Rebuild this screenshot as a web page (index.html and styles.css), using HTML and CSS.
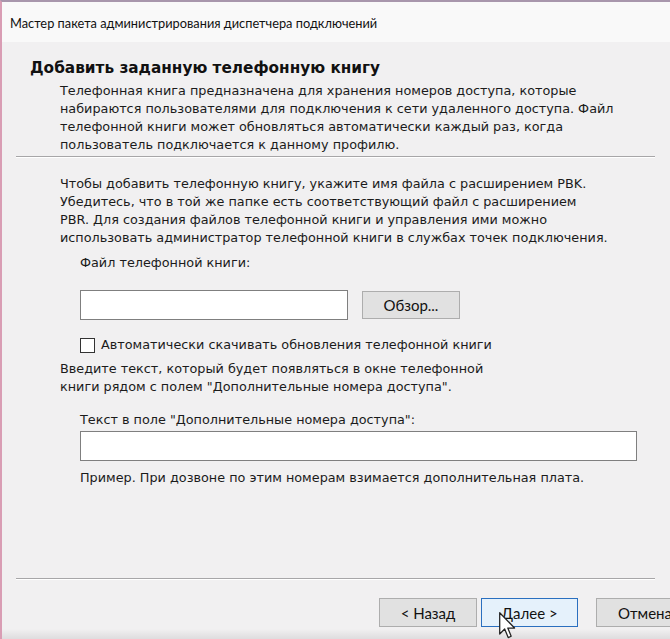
FILE: index.html
```html
<!DOCTYPE html>
<html lang="ru">
<head>
<meta charset="utf-8">
<title>Мастер пакета администрирования диспетчера подключений</title>
<link rel="stylesheet" href="styles.css">
</head>
<body>
<div class="window">
  <div class="titlebar">Мастер пакета администрирования диспетчера подключений</div>
  <div class="header">
    <div class="h-title">Добавить заданную телефонную книгу</div>
    <div class="h-desc">Телефонная книга предназначена для хранения номеров доступа, которые<br>набираются пользователями для подключения к сети удаленного доступа. Файл<br>телефонной книги может обновляться автоматически каждый раз, когда<br>пользователь подключается к данному профилю.</div>
  </div>
  <div class="sep"></div>
  <div class="content">
    <p class="para">Чтобы добавить телефонную книгу, укажите имя файла с расширением PBK.<br>Убедитесь, что в той же папке есть соответствующий файл с расширением<br>PBR. Для создания файлов телефонной книги и управления ими можно<br>использовать администратор телефонной книги в службах точек подключения.</p>
    <div class="indent">
      <div class="label first">Файл телефонной книги:</div>
      <div class="row">
        <div class="input short"></div>
        <div class="btn browse">Обзор...</div>
      </div>
      <div class="check"><span class="box"></span><span>Автоматически скачивать обновления телефонной книги</span></div>
    </div>
    <p class="para2">Введите текст, который будет появляться в окне телефонной<br>книги рядом с полем "Дополнительные номера доступа".</p>
    <div class="indent">
      <div class="label second">Текст в поле "Дополнительные номера доступа":</div>
      <div class="input wide"></div>
      <div class="note">Пример. При дозвоне по этим номерам взимается дополнительная плата.</div>
    </div>
  </div>
  <div class="sep"></div>
  <div class="footer">
    <div class="btn">&lt; Назад</div>
    <div class="btn active">Далее &gt;</div>
    <div class="btn cancel">Отмена</div>
  </div>
  <div class="bottom-shade"></div>
  <svg class="cursor" width="17" height="27" viewBox="0 0 12 19" aria-hidden="true">
    <path d="M0.5 0.5 L0.5 15.5 L4 12 L6.5 18 L8.6 17.1 L6.2 11.3 L11 11.3 Z" fill="#ffffff" stroke="#222" stroke-width="0.9" stroke-linejoin="round"/>
  </svg>
</div>
</body>
</html>
```

FILE: styles.css
```css
* { box-sizing: border-box; }
html, body { margin: 0; padding: 0; }
body {
  width: 670px;
  height: 639px;
  overflow: hidden;
  background: #f1f0f1;
}
.window {
  position: relative;
  width: 670px;
  height: 639px;
  overflow: hidden;
  border-top: 2px solid #a896ac;
  border-left: 2px solid #d99db4;
  background: #f1f0f1;
  display: flex;
  flex-direction: column;
  font-family: "DejaVu Sans", "Liberation Sans", sans-serif;
  font-size: 12.8px;
  color: #1b1b1b;
}
.titlebar {
  height: 40px;
  flex: none;
  background: #f9f9f9;
  padding-left: 8px;
  font-family: "Lato", "Noto Sans", sans-serif;
  font-size: 12.8px;
  line-height: 42px;
  color: #111;
}
.header {
  height: 114px;
  flex: none;
  padding: 16px 0 0 28px;
}
.h-title {
  font-weight: bold;
  font-size: 15.3px;
  line-height: 20px;
  color: #111;
}
.h-desc {
  margin: 4px 0 0 30px;
  line-height: 18px;
}
.sep {
  flex: none;
  height: 2px;
  margin: 0 15px 0 14px;
  border-top: 1px solid #a7a6a8;
  border-bottom: 1px solid #ffffff;
}
.content {
  height: 420px;
  flex: none;
  padding: 17px 0 0 58px;
}
.para {
  margin: 0;
  line-height: 18px;
}
.indent { margin-left: 20px; }
.label { line-height: 18px; }
.label.first { margin-top: 7px; }
.row {
  display: flex;
  align-items: center;
  gap: 14px;
  margin-top: 18px;
}
.input {
  height: 30px;
  background: #ffffff;
  border: 1px solid #7f7f7f;
}
.input.short { width: 268px; }
.input.wide { width: 557px; margin-top: 2px; }
.btn {
  height: 29px;
  width: 98px;
  flex: none;
  background: #e1e1e1;
  border: 1px solid #adadad;
  display: flex;
  align-items: center;
  justify-content: center;
  font-family: "Lato", "Noto Sans", sans-serif;
  font-size: 15px;
  color: #111;
}
.btn.browse { height: 28px; }
.check {
  display: flex;
  align-items: center;
  gap: 6px;
  margin-top: 16px;
  line-height: 18px;
}
.box {
  width: 15px;
  height: 15px;
  background: #ffffff;
  border: 1px solid #333;
  flex: none;
}
.para2 {
  margin: 6px 0 0 0;
  line-height: 17.5px;
}
.label.second { margin-top: 16px; }
.note {
  margin-top: 8px;
  line-height: 18px;
}
.footer {
  flex: none;
  display: flex;
  gap: 4px;
  padding: 18px 0 0 377px;
}
.btn.active {
  background: #e5f1fb;
  border-color: #2a6fbf;
  width: 97px;
}
.btn.cancel { margin-left: 14px; }
.bottom-shade {
  position: absolute;
  left: 0;
  right: 0;
  bottom: 0;
  height: 10px;
  background: linear-gradient(#f1f0f1, #dedcde);
}
.cursor {
  position: absolute;
  left: 497px;
  top: 610px;
}
```
